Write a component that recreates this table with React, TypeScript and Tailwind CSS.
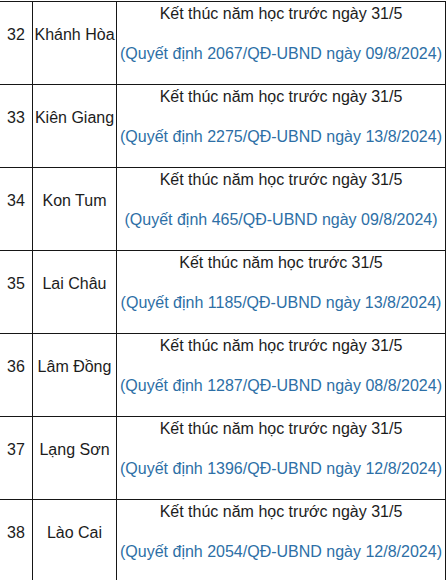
import React from "react";

const rows = [
  { n: "32", name: "Khánh Hòa", l1: "Kết thúc năm học trước ngày 31/5", l2: "(Quyết định 2067/QĐ-UBND ngày 09/8/2024)" },
  { n: "33", name: "Kiên Giang", l1: "Kết thúc năm học trước ngày 31/5", l2: "(Quyết định 2275/QĐ-UBND ngày 13/8/2024)" },
  { n: "34", name: "Kon Tum", l1: "Kết thúc năm học trước ngày 31/5", l2: "(Quyết định 465/QĐ-UBND ngày 09/8/2024)" },
  { n: "35", name: "Lai Châu", l1: "Kết thúc năm học trước 31/5", l2: "(Quyết định 1185/QĐ-UBND ngày 13/8/2024)" },
  { n: "36", name: "Lâm Đồng", l1: "Kết thúc năm học trước ngày 31/5", l2: "(Quyết định 1287/QĐ-UBND ngày 08/8/2024)" },
  { n: "37", name: "Lạng Sơn", l1: "Kết thúc năm học trước ngày 31/5", l2: "(Quyết định 1396/QĐ-UBND ngày 12/8/2024)" },
  { n: "38", name: "Lào Cai", l1: "Kết thúc năm học trước ngày 31/5", l2: "(Quyết định 2054/QĐ-UBND ngày 12/8/2024)" },
];

export default function App() {
  return (
    <div
      className="bg-white w-[447px] min-h-[580px] pt-[1px] text-[16px] text-[#1c1c1c]"
      style={{ fontFamily: '"Liberation Sans", Arial, sans-serif' }}
    >
      <div className="w-[446px] flex flex-col">
        {rows.map((r) => (
          <div key={r.n} className="flex h-[83px] border-t border-[#161616]">
            <div className="w-[32px] pt-[21px] text-center leading-6">{r.n}</div>
            <div className="w-[84px] border-l border-[#161616] pt-[21px] text-center leading-6 whitespace-nowrap">
              {r.name}
            </div>
            <div className="w-[330px] border-l border-r border-[#161616] flex flex-col items-center leading-6 whitespace-nowrap">
              <div>{r.l1}</div>
              <div className="mt-[16px] text-[#2d6fa6]">{r.l2}</div>
            </div>
          </div>
        ))}
      </div>
    </div>
  );
}
